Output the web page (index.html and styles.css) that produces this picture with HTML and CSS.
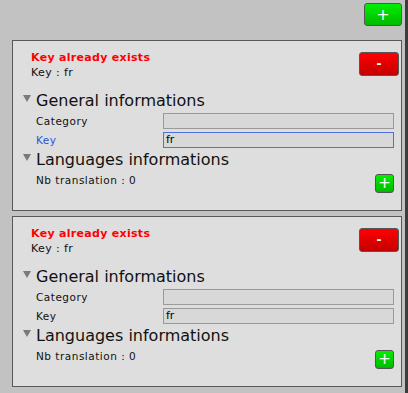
FILE: index.html
```html
<!DOCTYPE html>
<html lang="en">
<head>
    <meta charset="UTF-8">
    <title>Localization keys</title>
    <link rel="stylesheet" href="styles.css">
</head>
<body>
    <div class="inspector">
        <div class="toolbar">
            <button class="btn btn-add">+</button>
        </div>

        <div class="entry">
            <div class="entry-head">
                <div>
                    <div class="error">Key already exists</div>
                    <div class="key-line">Key : fr</div>
                </div>
                <button class="btn btn-remove">-</button>
            </div>
            <div class="section-title"><span class="fold"></span>General informations</div>
            <div class="field-row">
                <span class="label">Category</span>
                <input class="field" type="text" value="">
            </div>
            <div class="field-row">
                <span class="label focused">Key</span>
                <input class="field field-focus" type="text" value="fr">
            </div>
            <div class="section-title"><span class="fold"></span>Languages informations</div>
            <div class="count-row">
                <span class="label">Nb translation : 0</span>
                <button class="btn btn-small">+</button>
            </div>
        </div>

        <div class="entry">
            <div class="entry-head">
                <div>
                    <div class="error">Key already exists</div>
                    <div class="key-line">Key : fr</div>
                </div>
                <button class="btn btn-remove">-</button>
            </div>
            <div class="section-title"><span class="fold"></span>General informations</div>
            <div class="field-row">
                <span class="label">Category</span>
                <input class="field" type="text" value="">
            </div>
            <div class="field-row">
                <span class="label">Key</span>
                <input class="field" type="text" value="fr">
            </div>
            <div class="section-title"><span class="fold"></span>Languages informations</div>
            <div class="count-row">
                <span class="label">Nb translation : 0</span>
                <button class="btn btn-small">+</button>
            </div>
        </div>
    </div>
    <div class="scroll-edge"></div>
</body>
</html>
```

FILE: styles.css
```css
* {
    margin: 0;
    padding: 0;
    box-sizing: border-box;
}

body {
    display: flex;
    height: 100vh;
    background-color: #c2c2c2;
    font-family: "DejaVu Sans", Verdana, sans-serif;
    color: #111;
    overflow: hidden;
}

.inspector {
    flex: 1;
    display: flex;
    flex-direction: column;
    padding: 3px 3px 0 12px;
    gap: 5px;
}

.scroll-edge {
    width: 3px;
    background-color: #3c3c3c;
}

.toolbar {
    display: flex;
    justify-content: flex-end;
    height: 32px;
}

.btn {
    border: 1px solid #555;
    border-radius: 3px;
    color: white;
    font-family: "DejaVu Sans", sans-serif;
    cursor: pointer;
}

.btn-add {
    width: 38px;
    height: 23px;
    font-size: 16px;
    background: linear-gradient(#00f000, #00b800);
}

.btn-remove {
    width: 40px;
    height: 24px;
    margin-top: 1px;
    font-size: 12px;
    font-weight: bold;
    background: linear-gradient(#ff0000, #c40000);
}

.btn-small {
    width: 19px;
    height: 19px;
    font-size: 15px;
    line-height: 15px;
    margin-right: 5px;
    background: linear-gradient(#00f000, #00b800);
}

.entry {
    background-color: #dedede;
    border: 1px solid #595959;
    padding: 10px 2px 17px 10px;
}

.entry-head {
    display: flex;
    justify-content: space-between;
    align-items: flex-start;
    padding-left: 8px;
    margin-bottom: 10px;
}

.error {
    color: #ff0000;
    font-size: 11px;
    font-weight: bold;
    letter-spacing: 0.3px;
    line-height: 13px;
}

.key-line {
    font-size: 11px;
    line-height: 17px;
    letter-spacing: 0.4px;
}

.section-title {
    display: flex;
    align-items: center;
    font-size: 16px;
    line-height: 19px;
    padding-bottom: 1px;
}

.field-row + .section-title {
    margin-top: 1px;
}

.fold {
    width: 0;
    height: 0;
    border-left: 4px solid transparent;
    border-right: 4px solid transparent;
    border-top: 7px solid #7a7a7a;
    margin: -5px 5px 0 0;
}

.field-row {
    display: flex;
    align-items: center;
    height: 19px;
    padding-left: 13px;
}

.label {
    font-size: 10.5px;
    letter-spacing: 0.5px;
    width: 127px;
}

.label.focused {
    color: #2755d9;
}

.field {
    width: 231px;
    height: 16px;
    background-color: #d8d8d8;
    border: 1px solid #9a9a9a;
    font-family: "DejaVu Sans", sans-serif;
    font-size: 11px;
    padding-left: 2px;
    outline: none;
}

.field-focus {
    border-color: #4f73dd;
}

.count-row {
    display: flex;
    justify-content: space-between;
    align-items: flex-start;
    padding-left: 13px;
    margin-top: 4px;
}

.count-row .label {
    width: auto;
}
```
